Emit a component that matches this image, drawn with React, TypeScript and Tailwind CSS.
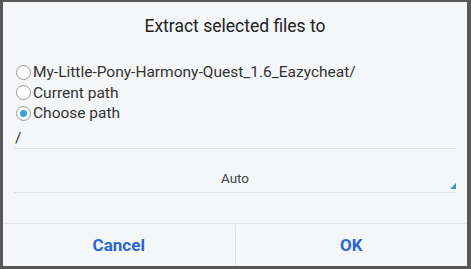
import React from "react";

function Radio({ checked }: { checked?: boolean }) {
  return (
    <span className="w-[15px] h-[15px] rounded-full border border-[#9a9a9a] bg-white flex items-center justify-center shrink-0">
      {checked && <span className="w-[7px] h-[7px] rounded-full bg-[#3aa0d8]" />}
    </span>
  );
}

export default function App() {
  return (
    <div className="w-[471px] h-[269px] bg-[#585858] pt-[2px] pl-[3px] pr-[4px] pb-[3px]" style={{ fontFamily: "Roboto, 'Noto Sans', sans-serif" }}>
      <div className="w-full h-full bg-[#f5f6f8] flex flex-col">
        <div className="h-[48px] flex items-center justify-center text-[17.5px] text-[#222]">Extract selected files to</div>
        <div className="mt-[12px] flex flex-col pl-[13px] text-[15.5px] text-[#333] leading-[20.5px]">
          <div className="flex items-center gap-[2px]"><Radio />My-Little-Pony-Harmony-Quest_1.6_Eazycheat/</div>
          <div className="flex items-center gap-[2px]"><Radio />Current path</div>
          <div className="flex items-center gap-[2px]"><Radio checked />Choose path</div>
        </div>
        <div className="mx-[11px] h-[25px] border-b border-[#e0e1e3] text-[15.5px] text-[#333] pl-[1px] pt-[4px] leading-[20px]">/</div>
        <div className="mx-[11px] mt-[13px] h-[31px] border-b border-[#e0e1e3] relative flex items-center justify-center pt-[3px] text-[13.5px] text-[#444]">
          Auto
          <span className="absolute right-[0px] bottom-[3px] w-0 h-0 border-l-[6px] border-l-transparent border-b-[6px] border-b-[#2f96d4]" />
        </div>
        <div className="flex-1" />
        <div className="h-[43px] border-t border-[#e3e4e6] flex text-[17px] font-bold text-[#2866d3] pt-[1px]">
          <div className="flex-1 flex items-center justify-center border-r border-[#e3e4e6]">Cancel</div>
          <div className="flex-1 flex items-center justify-center">OK</div>
        </div>
      </div>
    </div>
  );
}
